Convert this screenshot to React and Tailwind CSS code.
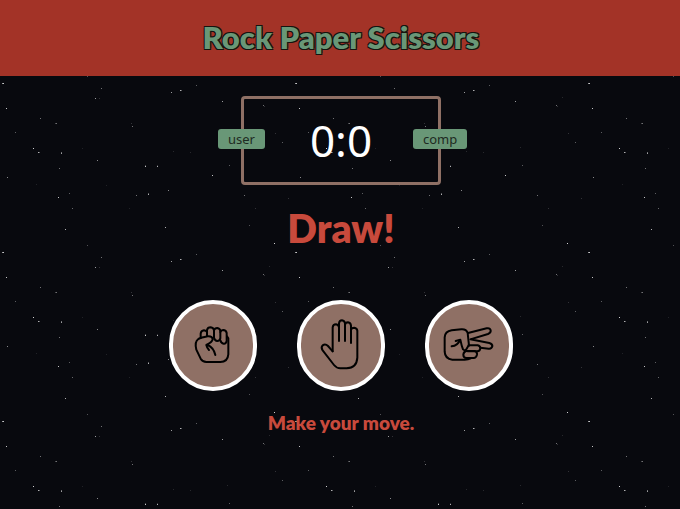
import React from "react";

// [x, y, brightness] inside one 293 x 169 tile of night sky
const STARS = [
  [2, 83, 0.7], [3, 83, 0.9], [87, 76, 0.35], [101, 88, 0.5], [95, 98, 0.7], [99, 98, 0.2],
  [171, 92, 0.7], [180, 90, 0.8], [181, 90, 0.4], [196, 85, 0.4], [6, 108, 0.9], [40, 118, 0.5],
  [55, 123, 0.3], [56, 123, 0.5], [132, 126, 0.5], [131, 123, 0.2], [15, 132, 0.4], [33, 148, 0.95],
  [38, 152, 0.8], [39, 152, 0.4], [61, 152, 0.5], [61, 153, 0.7], [97, 160, 0.6], [59, 168, 0.5],
  [7, 177, 0.6], [145, 166, 0.9], [145, 165, 0.3], [157, 166, 0.8], [157, 165, 0.2], [212, 175, 0.9],
  [168, 190, 0.6], [148, 193, 0.4], [148, 194, 0.8], [136, 195, 0.5], [69, 193, 0.4], [58, 197, 0.9],
  [72, 208, 0.45], [65, 229, 0.8], [165, 227, 0.8], [222, 101, 0.7], [263, 105, 0.5], [264, 106, 0.2],
  [282, 142, 0.4], [229, 165, 0.4], [275, 133, 0.2], [244, 195, 0.5], [249, 225, 0.35], [288, 198, 0.2],
  [274, 243, 0.95], [255, 208, 0.2], [269, 97, 0.15], [227, 147, 0.15], [129, 208, 0.12],
  [82, 148, 0.12], [106, 185, 0.12], [173, 151, 0.15], [190, 152, 0.15], [36, 184, 0.12],
];

function Sky() {
  return (
    <svg className="absolute inset-0 -z-10 h-full w-full" aria-hidden="true" shapeRendering="crispEdges">
      <defs>
        <pattern id="sky" width="293" height="169" patternUnits="userSpaceOnUse">
          {STARS.map(([x, y, o], i) => (
            <rect key={i} x={x} y={y % 169} width="1" height="1" fill="#fff" opacity={o * 0.85} />
          ))}
        </pattern>
      </defs>
      <rect width="100%" height="100%" fill="url(#sky)" />
    </svg>
  );
}

const MOVES = [
  {
    name: "Rock",
    viewBox: "54 61 180 180",
    paths: [
      "M107 127V114Q108 105 117 104Q124 105 126 109",
      "M126 121V103Q128 95 137 95Q146 96 147 104V124",
      "M147 104Q149 97 157 97Q165 98 166 106V128Q164 136 157 136Q149 135 147 126",
      "M166 109Q168 103 176 103Q184 105 185 112V136Q183 145 176 144Q168 143 166 134",
      "M186 122L190 128V176Q188 199 166 199H124Q113 199 107 189L94 162Q88 138 100 130Q108 126 128 122Q142 121 143 131Q142 139 124 148Q126 157 132 163",
      "M128 148Q146 156 151 178",
    ],
  },
  {
    name: "Paper",
    viewBox: "63 61 180 180",
    paths: [
      "M128 167V95Q129 86 138 86Q146 87 147 95V136",
      "M147 95V83Q148 74 156 74Q164 75 165 83V136",
      "M165 88Q166 80 174 80Q182 81 183 90V142",
      "M183 103Q184 96 193 96Q201 97 202 105V186Q200 217 170 218H151Q140 218 132 208L98 164Q92 155 98 149Q106 143 114 151L128 167",
    ],
  },
  {
    name: "Scissors",
    viewBox: "57 61 180 180",
    paths: [
      "M147 150L143 112Q139 100 124 101L95 104Q75 107 74 125V168Q75 190 97 192H134Q145 192 152 188",
      "M144 112L200 98Q210 96 212 104Q213 111 204 115L151 131L208 142Q218 145 217 152Q215 160 206 159L181 156",
      "M146 149H173Q181 151 181 158Q180 166 172 167H143",
      "M139 166H164Q172 168 171 177Q169 187 161 187H139Q130 186 130 177Q131 168 139 166Z",
      "M95 152Q113 150 120 133",
      "M107 136L121 132Q125 152 129 161Q135 167 140 159L146 149",
    ],
  },
];

function Badge({ side, children }) {
  return (
    <span
      className={
        "absolute top-[30px] rounded-[3px] bg-[#699777] px-2.5 text-[13px] leading-5 text-[#1e2a22] " + side
      }
    >
      {children}
    </span>
  );
}

export default function App() {
  return (
    <div className="relative isolate min-h-screen bg-[#08090e] font-['Noto_Sans',sans-serif]">
      <Sky />
      <header className="flex h-[76px] items-center justify-center bg-[#a33327] pb-0.5 pl-0.5">
        <h1 className="font-[Lato,sans-serif] text-[31px] leading-10 font-extrabold text-[#699777] [text-shadow:-1px_-1px_0_#15140f,1px_-1px_0_#15140f,-1px_1px_0_#15140f,1px_1px_0_#15140f]">
          Rock Paper Scissors
        </h1>
      </header>
      <main className="flex flex-col items-center pt-5 pl-0.5 text-[#c84a3c]">
        <div className="relative flex h-[89px] w-[200px] items-center justify-center rounded-[4px] border-[3px] border-[#8f7065] pb-0.5 text-[44px] leading-none text-white">
          <Badge side="right-[173px]">user</Badge>
          <p>0:0</p>
          <Badge side="left-[169px]">comp</Badge>
        </div>
        <p className="mt-5 font-[Lato,sans-serif] text-[39px] leading-[46px] font-extrabold">Draw!</p>
        <div className="mt-[49px] flex gap-10">
          {MOVES.map((move) => (
            <button
              key={move.name}
              type="button"
              aria-label={move.name}
              className="flex h-[91px] w-[88px] items-center justify-center rounded-full border-4 border-white bg-[#8f7065]"
            >
              <svg
                viewBox={move.viewBox}
                className="size-[60px] shrink-0 fill-none stroke-black stroke-6"
                strokeLinecap="round"
                strokeLinejoin="round"
                aria-hidden="true"
              >
                {move.paths.map((d) => (
                  <path key={d} d={d} />
                ))}
              </svg>
            </button>
          ))}
        </div>
        <p className="mt-5 font-[Lato,sans-serif] text-[19px] leading-6 font-extrabold">Make your move.</p>
      </main>
    </div>
  );
}
